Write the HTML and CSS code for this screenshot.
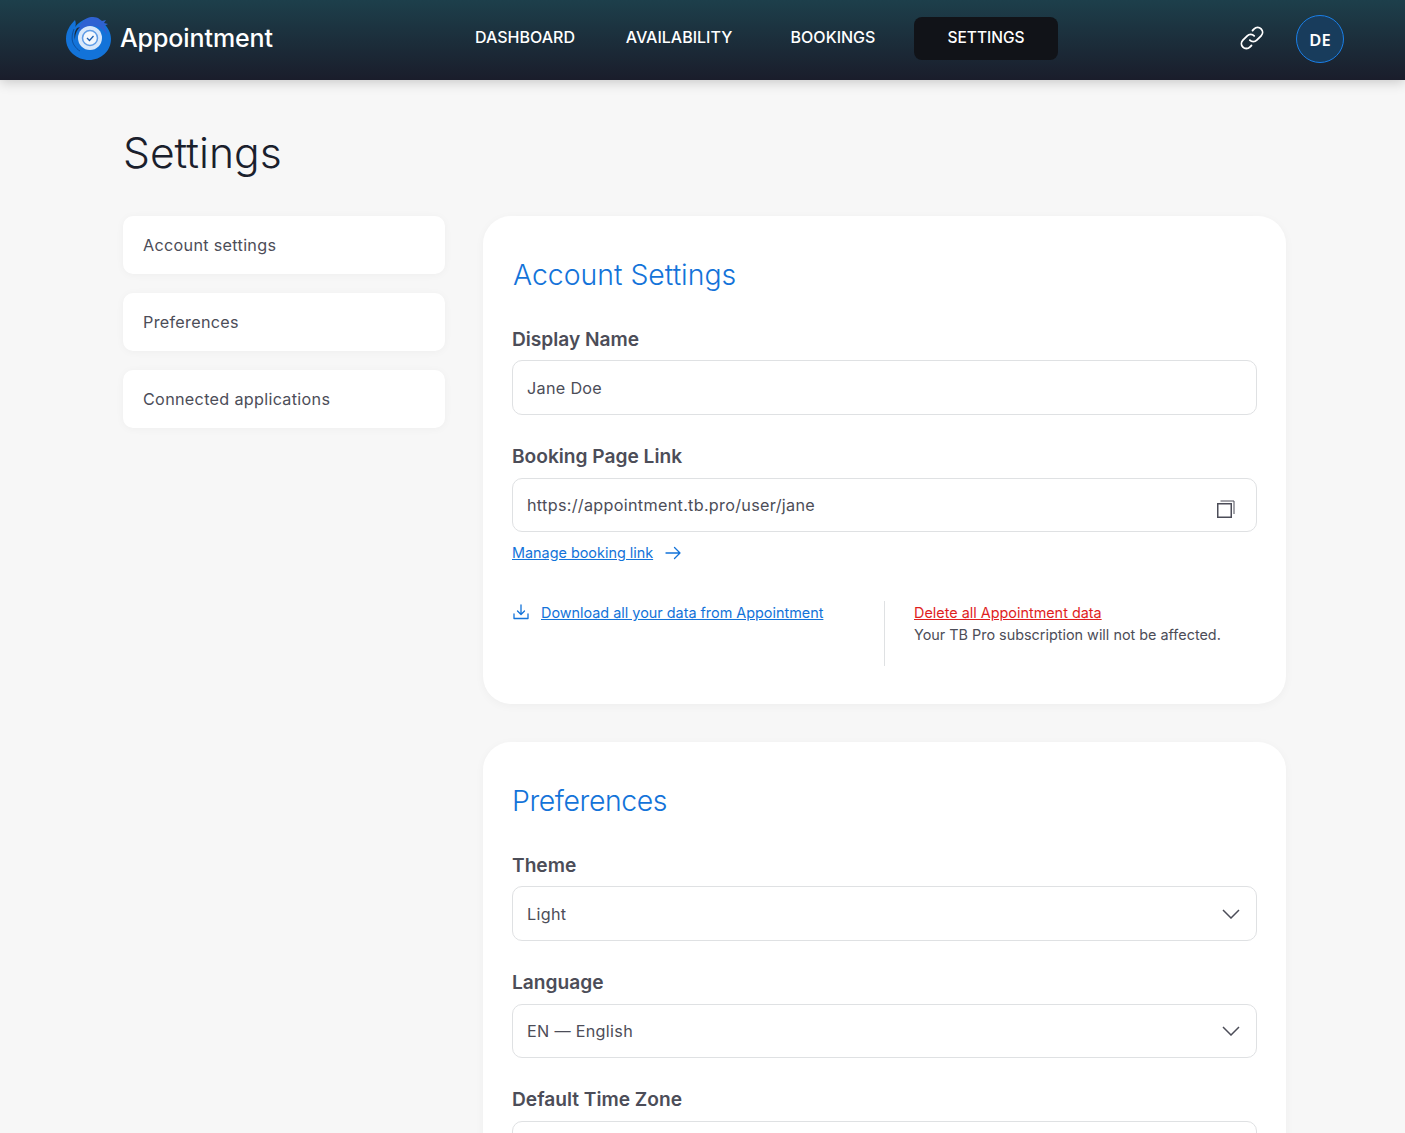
FILE: index.html
```html
<!DOCTYPE html>
<html lang="en">
<head>
    <meta charset="UTF-8">
    <meta name="viewport" content="width=device-width, initial-scale=1.0">
    <title>Settings - Appointment</title>
    <link rel="stylesheet" href="styles.css">
</head>
<body>
    <header class="top-bar">
        <a class="logo" href="#">
            <svg class="logo-mark" viewBox="0 0 46 46" width="46" height="46" aria-hidden="true">
                <path fill="#1373d9" d="M9 5c1 3 1 5 0 7 3-4 7-7 12-8 6-1 12 0 16 4 5 4 8 10 8 16 0 12-10 21-22 21S0 36 0 24c0-8 4-14 9-19z"/>
                <path fill="#2f62d2" d="M13 12c2-5 6-9 12-10 3 0 5 0 7 1l4 3 4-1-2 3 4 1-4 2c2 3 3 6 3 9-3-6-9-9-15-9-5 0-10 2-13 6z"/>
                <path fill="none" stroke="#0d4f9e" stroke-width="1" d="M8 14c-2 5-3 11 0 16 2 3 4 5 6 6"/>
                <path fill="#1b2a3a" d="M11 13c-3 4-3 8-2 12 0-5 1-9 5-13z"/>
                <circle cx="24" cy="23" r="12" fill="#d7e7fa"/>
                <circle cx="24" cy="23" r="7.500" fill="#f2f7fd" stroke="#5f9ce6" stroke-width="1.500"/>
                <path fill="none" stroke="#1d5fb0" stroke-width="1.300" d="M21 23l2.500 2.500 4-4.500"/>
            </svg>
            <span class="logo-text">Appointment</span>
        </a>
        <nav class="main-nav">
            <a class="nav-item nav-dashboard" href="#">DASHBOARD</a>
            <a class="nav-item nav-availability" href="#">AVAILABILITY</a>
            <a class="nav-item nav-bookings" href="#">BOOKINGS</a>
            <a class="nav-item nav-settings active" href="#">SETTINGS</a>
        </nav>
        <div class="top-actions">
            <svg class="link-icon" viewBox="0 0 24 24" width="26" height="26" fill="none" stroke="#fff" stroke-width="1.700" stroke-linecap="round" aria-hidden="true">
                <path d="M10 14a4.500 4.500 0 0 0 6.400 0l4-4a4.500 4.500 0 0 0-6.400-6.400l-1.500 1.500"/>
                <path d="M14 10a4.500 4.500 0 0 0-6.400 0l-4 4a4.500 4.500 0 0 0 6.400 6.400l1.500-1.500"/>
            </svg>
            <div class="avatar">DE</div>
        </div>
    </header>

    <main class="page">
        <h1 class="page-title">Settings</h1>
        <div class="columns">
            <aside class="side-menu">
                <a class="side-item" href="#">Account settings</a>
                <a class="side-item" href="#">Preferences</a>
                <a class="side-item" href="#">Connected applications</a>
            </aside>

            <div class="panels">
                <section class="panel panel-account">
                    <h2 class="panel-title title-account">Account Settings</h2>

                    <label class="field-label">Display Name</label>
                    <div class="field field-tall">Jane Doe</div>

                    <label class="field-label">Booking Page Link</label>
                    <div class="field">
                        <span>https://appointment.tb.pro/user/jane</span>
                        <svg class="copy-icon" viewBox="0 0 18 18" width="18" height="18" fill="none" stroke="#4c4d58" aria-hidden="true">
                            <rect x="0.750" y="3.750" width="13.500" height="13.500" stroke-width="1.500"/>
                            <path d="M3.500 1h13.500v13" stroke-width="1"/>
                        </svg>
                    </div>
                    <div class="manage-row">
                        <a class="link" href="#">Manage booking link</a>
                        <svg viewBox="0 0 16 16" width="16" height="16" fill="none" stroke="#1373d9" stroke-width="1.300" stroke-linecap="round" stroke-linejoin="round" aria-hidden="true">
                            <path d="M1 8h14M9.500 2.500L15 8l-5.500 5.500"/>
                        </svg>
                    </div>

                    <div class="data-actions">
                        <div class="data-left">
                            <svg class="download-icon" viewBox="0 0 16 16" width="16" height="16" fill="none" stroke="#1373d9" stroke-width="1.300" stroke-linecap="round" stroke-linejoin="round" aria-hidden="true">
                                <path d="M8 1v9M4.500 7L8 10.500 11.500 7M1 10v4.500h14V10"/>
                            </svg>
                            <a class="link" href="#">Download all your data from Appointment</a>
                        </div>
                        <div class="data-right">
                            <a class="link link-danger" href="#">Delete all Appointment data</a>
                            <p class="data-note">Your TB Pro subscription will not be affected.</p>
                        </div>
                    </div>
                </section>

                <section class="panel">
                    <h2 class="panel-title title-preferences">Preferences</h2>

                    <label class="field-label">Theme</label>
                    <div class="field field-tall">
                        <span>Light</span>
                        <svg class="chevron" viewBox="0 0 18 10" width="18" height="10" fill="none" stroke="#4c4d58" stroke-width="1.500" aria-hidden="true">
                            <path d="M1 1l8 8 8-8"/>
                        </svg>
                    </div>

                    <label class="field-label">Language</label>
                    <div class="field">
                        <span>EN — English</span>
                        <svg class="chevron" viewBox="0 0 18 10" width="18" height="10" fill="none" stroke="#4c4d58" stroke-width="1.500" aria-hidden="true">
                            <path d="M1 1l8 8 8-8"/>
                        </svg>
                    </div>

                    <label class="field-label">Default Time Zone</label>
                    <div class="field"></div>
                </section>
            </div>
        </div>
    </main>
</body>
</html>
```

FILE: styles.css
```css
* {
    margin: 0;
    padding: 0;
    box-sizing: border-box;
}

html,
body {
    height: 100vh;
    overflow: hidden;
}

body {
    font-family: Inter, "Liberation Sans", sans-serif;
    background-color: #f7f7f7;
    color: #4c4d58;
}

a {
    text-decoration: none;
    color: inherit;
}

/* Top bar */
.top-bar {
    height: 80px;
    display: flex;
    align-items: center;
    padding: 0 61px 4px 65px;
    background: linear-gradient(180deg, #1d3f4b 0%, #1a1d2b 100%);
    box-shadow: 0 2px 12px rgba(0, 0, 0, 0.2);
    color: #fff;
}

.logo {
    display: flex;
    align-items: center;
    gap: 8px;
    width: 385px;
}

.logo-mark {
    margin-left: 1px;
}

.logo-text {
    font-size: 25px;
    font-weight: 500;
    letter-spacing: -0.1px;
}

.main-nav {
    display: flex;
    align-items: center;
    margin-top: 1px;
}

.nav-item {
    font-size: 16px;
    font-weight: 500;
    text-align: center;
    height: 43px;
    line-height: 41px;
}

.nav-dashboard {
    width: 150px;
}

.nav-availability {
    width: 158px;
}

.nav-bookings {
    width: 150px;
}

.nav-settings {
    width: 144px;
    margin-left: 6px;
    font-size: 15.500px;
}

.nav-item.active {
    background-color: #111318;
    border-radius: 8px;
}

.top-actions {
    margin-left: auto;
    display: flex;
    align-items: center;
    gap: 31px;
}

.avatar {
    width: 48px;
    height: 48px;
    border-radius: 50%;
    border: 1.500px solid #1a7fe8;
    background-color: #183c5c;
    display: flex;
    align-items: center;
    justify-content: center;
    font-family: "Noto Sans", sans-serif;
    font-size: 16.500px;
    font-weight: 600;
    margin-top: 2px;
}

/* Page */
.page {
    width: 1163px;
    margin-left: 123px;
}

.page-title {
    font-size: 42.600px;
    font-weight: 300;
    line-height: 54px;
    color: #1a202c;
    margin: 46px 0 36px 0;
}

.columns {
    display: flex;
    gap: 38px;
    align-items: flex-start;
}

.side-menu {
    width: 322px;
    display: flex;
    flex-direction: column;
    gap: 19px;
}

.side-item {
    height: 58px;
    line-height: 58px;
    padding-left: 20px;
    background-color: #fff;
    border-radius: 10px;
    font-size: 16.200px;
    letter-spacing: 0.300px;
    box-shadow: 0 1px 8px rgba(0, 0, 0, 0.04);
}

.panels {
    flex: 1;
    display: flex;
    flex-direction: column;
    gap: 38px;
}

.panel {
    background-color: #fff;
    border-radius: 28px;
    padding: 41px 29px 38px;
    box-shadow: 0 2px 10px rgba(0, 0, 0, 0.04);
}

.panel-title {
    font-size: 28.400px;
    font-weight: 300;
    line-height: 36px;
    color: #1373d9;
    margin-bottom: 32px;
}

.title-account {
    margin-left: 1px;
}

.title-preferences {
    letter-spacing: -0.400px;
}

.field-label {
    display: block;
    font-size: 19.150px;
    font-weight: 600;
    line-height: 28px;
    margin-bottom: 8px;
}

.panel-title + .field-label {
    margin-bottom: 7px;
}

.field {
    height: 54px;
    display: flex;
    align-items: center;
    justify-content: space-between;
    padding: 0 16px 0 14px;
    border: 1px solid #dfe1e3;
    border-radius: 10px;
    background-color: #fff;
    font-size: 16.200px;
    letter-spacing: 0.300px;
    margin-bottom: 27px;
}

.field-tall {
    height: 55px;
    padding-top: 1px;
}

.copy-icon {
    margin-right: 5px;
    margin-top: 7px;
}

.manage-row {
    display: flex;
    align-items: center;
    gap: 12px;
    margin-top: -15px;
    height: 18px;
}

.link {
    color: #1373d9;
    font-size: 14.400px;
    text-decoration: underline;
    line-height: 18px;
}

.data-actions {
    display: flex;
    margin-top: 39px;
    height: 65px;
}

.data-left {
    width: 372px;
    display: flex;
    align-items: flex-start;
    gap: 12px;
    padding-top: 3px;
    border-right: 1px solid #dfe1e3;
    box-sizing: content-box;
}

.download-icon {
    margin-left: 1px;
}

.data-right {
    padding-left: 29px;
    line-height: 22px;
}

.link-danger {
    color: #e01e1e;
}

.data-note {
    font-size: 14.400px;
    line-height: 22px;
    margin-top: 1px;
}
```
